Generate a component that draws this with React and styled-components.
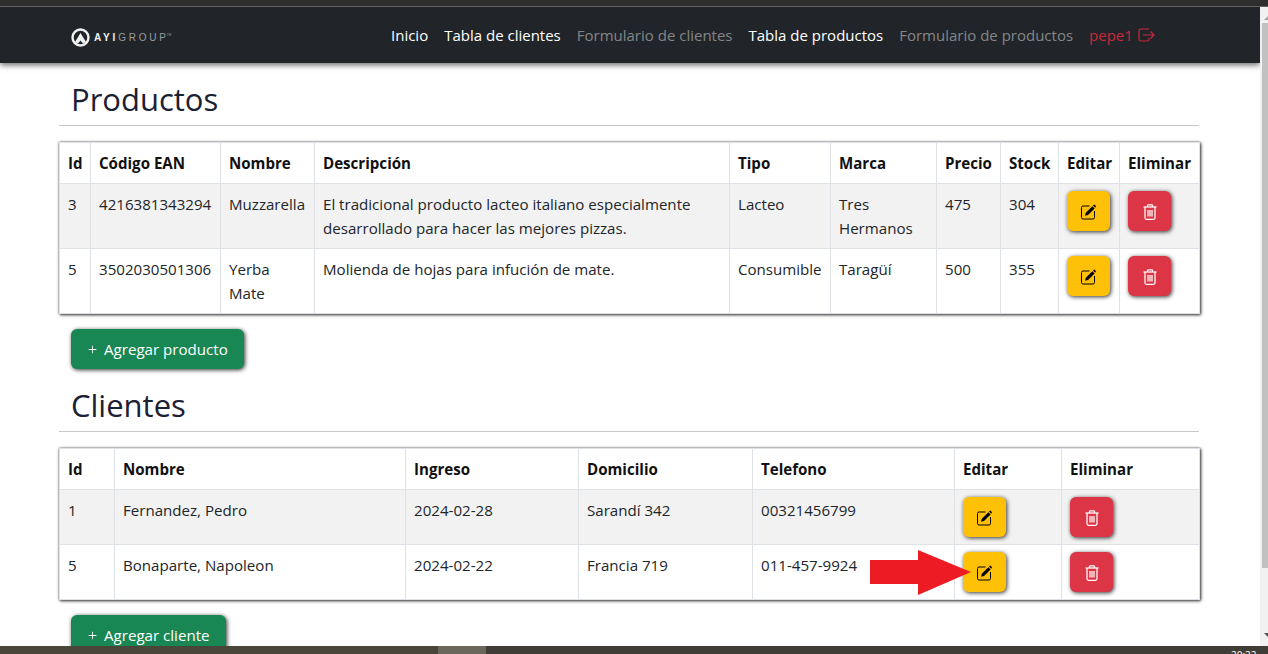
import React from 'react';
import styled, { createGlobalStyle } from 'styled-components';
import { AiOutlinePlus } from 'react-icons/ai';

const GlobalStyle = createGlobalStyle`
  html, body { margin: 0; padding: 0; background: #fff; overflow: hidden; }
  * { box-sizing: border-box; }
`;

const Screen = styled.div`
  width: 1268px;
  height: 654px;
  display: flex;
  flex-direction: column;
  overflow: hidden;
  font-family: 'Open Sans', 'Liberation Sans', sans-serif;
  font-size: 15.1px;
  line-height: 24px;
  color: #212529;
`;

const TopStrip = styled.div`
  flex: none;
  height: 7px;
  background: #2e2e2e;
  border-bottom: 1px solid #5f5f5f;
`;

const Middle = styled.div`
  flex: 1;
  min-height: 0;
  display: flex;
`;

const Page = styled.div`
  position: relative;
  flex: 1;
  min-width: 0;
  overflow: hidden;
  background: #fff;
`;

const Navbar = styled.nav`
  height: 56px;
  padding-left: 71px;
  display: flex;
  align-items: center;
  background: #212529;
  box-shadow: 0 2px 6px rgba(0, 0, 0, 0.6);
`;

const Brand = styled.div`
  width: 320px;
  padding-top: 5px;
  display: flex;
  align-items: center;
  gap: 4px;
`;

const BrandText = styled.span`
  font-family: 'Liberation Sans', sans-serif;
  font-size: 10px;
  line-height: 12px;
  letter-spacing: 2.8px;
  color: #9a9c9e;
  white-space: nowrap;
`;

const BrandStrong = styled.b`
  color: #f2f2f2;
`;

const BrandMark = styled.sup`
  margin-left: -2px;
  font-size: 3px;
  line-height: 0;
  letter-spacing: 0;
  vertical-align: 5px;
`;

const Links = styled.div`
  display: flex;
  align-items: center;
  gap: 16px;
  font-size: 15px;
`;

const NavLink = styled.a`
  color: ${p => (p.$dim ? 'rgba(255, 255, 255, 0.45)' : '#fff')};
  white-space: nowrap;
`;

const UserLink = styled.a`
  display: flex;
  align-items: center;
  gap: 5px;
  color: #c72a3c;
`;

const Container = styled.main`
  width: 1140px;
  margin-left: 59px;
`;

const Title = styled.h1`
  margin: 0;
  padding: 11px 12px 0;
  height: 63px;
  font-size: 31px;
  line-height: 50px;
  font-weight: 500;
  color: #1c2033;
  border-bottom: 1px solid #c8c8c8;
`;

const Table = styled.table`
  width: 1140px;
  margin-top: 16px;
  table-layout: fixed;
  border-collapse: collapse;
  box-shadow: 1px 1px 3px rgba(0, 0, 0, 0.75), 0 0 2px rgba(0, 0, 0, 0.5);
`;

const Th = styled.th`
  padding: 8px;
  text-align: left;
  font-weight: 700;
  color: #111;
  border: 1px solid #dee2e6;
  white-space: nowrap;
`;

const Row = styled.tr`
  background: ${p => (p.$striped ? '#f2f2f2' : '#fff')};
`;

const Td = styled.td`
  padding: 8px;
  vertical-align: top;
  border: 1px solid #dee2e6;
`;

const ActionCell = styled.td`
  padding: 7px 8px;
  vertical-align: top;
  border: 1px solid #dee2e6;
`;

const ActionButton = styled.button`
  width: 43px;
  height: 40px;
  padding: 2px 0 0;
  display: flex;
  align-items: center;
  justify-content: center;
  border: none;
  border-radius: 6px;
  background: ${p => (p.$danger ? '#dc3545' : '#ffc107')};
  color: ${p => (p.$danger ? '#fff' : '#000')};
  box-shadow: 1px 1px 4px rgba(0, 0, 0, 0.8);
`;

const AddButton = styled.button`
  height: 40px;
  margin: 15px 0 0 12px;
  padding: 0 16px;
  display: flex;
  align-items: center;
  gap: 6px;
  border: none;
  border-radius: 6px;
  background: #198754;
  color: #fff;
  font: inherit;
  box-shadow: 1px 1px 4px rgba(0, 0, 0, 0.8);
`;

const ArrowMark = styled.svg`
  position: absolute;
  left: 870px;
  top: 543px;
`;

const Scrollbar = styled.div`
  flex: none;
  width: 8px;
  display: flex;
  flex-direction: column;
  align-items: flex-start;
  background: #f1f1f1;
`;

const ScrollArrow = styled.div`
  flex: none;
  width: 0;
  height: 0;
  margin: ${p => (p.$down ? 'auto 0 9px 4px' : '9px 0 0 4px')};
  border-left: 4px solid transparent;
  border-right: 4px solid transparent;
  border-top: ${p => (p.$down ? '4px solid #505050' : 'none')};
  border-bottom: ${p => (p.$down ? 'none' : '4px solid #a3a3a3')};
`;

const ScrollThumb = styled.div`
  flex: none;
  width: 6px;
  height: 545px;
  margin: 3px 0 0 2px;
  background: #c1c1c1;
`;

const Taskbar = styled.footer`
  flex: none;
  height: 8px;
  display: flex;
  overflow: hidden;
  background: #4a4539;
`;

const TaskSlot = styled.div`
  width: 48px;
  margin-left: 438px;
  background: #6c675d;
`;

const TaskRest = styled.div`
  flex: 1;
  background: #3f3d35;
`;

const Clock = styled.span`
  position: absolute;
  left: 1231px;
  top: 649px;
  height: 5px;
  overflow: hidden;
  font-size: 10px;
  line-height: 12px;
  color: #fff;
`;

const productCols = [31, 130, 94, 415, 101, 106, 64, 58, 61, 80];
const clientCols = [55, 291, 173, 174, 202, 107, 138];

const products = [
  {
    id: 3,
    ean: '4216381343294',
    name: 'Muzzarella',
    desc: 'El tradicional producto lacteo italiano especialmente desarrollado para hacer las mejores pizzas.',
    type: 'Lacteo',
    brand: 'Tres Hermanos',
    price: 475,
    stock: 304,
  },
  {
    id: 5,
    ean: '3502030501306',
    name: 'Yerba Mate',
    desc: 'Molienda de hojas para infución de mate.',
    type: 'Consumible',
    brand: 'Taragüí',
    price: 500,
    stock: 355,
  },
];

const clients = [
  { id: 1, name: 'Fernandez, Pedro', since: '2024-02-28', address: 'Sarandí 342', phone: '00321456799' },
  { id: 5, name: 'Bonaparte, Napoleon', since: '2024-02-22', address: 'Francia 719', phone: '011-457-9924' },
];

const Logo = () => (
  <svg width="19" height="19" viewBox="0 0 19 19">
    <circle cx="9.5" cy="9.5" r="8" fill="none" stroke="#f2f2f2" strokeWidth="2.4" />
    <path d="M9.5 5 L15 14 L12 15.5 L9.5 12.5 L7 15.5 L4 14 Z" fill="#f2f2f2" />
  </svg>
);

const LogoutIcon = () => (
  <svg width="17" height="14" viewBox="0 0 17 14" fill="none" stroke="currentColor" strokeWidth="1.2">
    <path d="M11 1 H2.5 A1.5 1.5 0 0 0 1 2.5 V11.5 A1.5 1.5 0 0 0 2.5 13 H9.5 A1.5 1.5 0 0 0 11 11.5 V10" />
    <path d="M5 7 H16 M12.5 3.5 L16 7 L12.5 10.5" />
  </svg>
);

const EditIcon = () => (
  <svg width="15" height="16" viewBox="0 0 15 16">
    <path
      d="M8.5 2 H2 A1.5 1.5 0 0 0 0.5 3.5 V13.5 A1.5 1.5 0 0 0 2 15 H12 A1.5 1.5 0 0 0 13.5 13.5 V7"
      fill="none"
      stroke="#000"
      strokeWidth="1"
    />
    <path d="M4 11.8 L4.8 8.8 L11.4 2.2 L13.6 4.4 L7 11 Z" fill="#000" />
    <path d="M12 1.6 L12.8 0.8 Q13.2 0.4 13.7 0.8 L14.8 1.9 Q15 2.4 14.7 2.8 L14.2 3.8 Z" fill="#000" />
  </svg>
);

const TrashIcon = () => (
  <svg width="14" height="16" viewBox="0 0 14 16" fill="none" stroke="#fff" strokeWidth="1.25">
    <path d="M0.5 3 H13.5" />
    <path d="M4.5 3 V1.5 Q4.5 0.8 5.2 0.8 H8.8 Q9.5 0.8 9.5 1.5 V3" />
    <path d="M2 3 V13.8 Q2 15.3 3.5 15.3 H10.5 Q12 15.3 12 13.8 V3" />
    <path d="M5 6 V12.5 M7 6 V12.5 M9 6 V12.5" />
  </svg>
);

const RowActions = () => (
  <>
    <ActionCell>
      <ActionButton><EditIcon /></ActionButton>
    </ActionCell>
    <ActionCell>
      <ActionButton $danger><TrashIcon /></ActionButton>
    </ActionCell>
  </>
);

const Columns = ({ widths }) => (
  <colgroup>
    {widths.map((w, i) => <col key={i} width={w} />)}
  </colgroup>
);

export default function App() {
  return (
    <Screen>
      <GlobalStyle />
      <TopStrip />
      <Middle>
        <Page>
          <Navbar>
            <Brand>
              <Logo />
              <BrandText><BrandStrong>AYI</BrandStrong>GROUP<BrandMark>TM</BrandMark></BrandText>
            </Brand>
            <Links>
              <NavLink>Inicio</NavLink>
              <NavLink>Tabla de clientes</NavLink>
              <NavLink $dim>Formulario de clientes</NavLink>
              <NavLink>Tabla de productos</NavLink>
              <NavLink $dim>Formulario de productos</NavLink>
              <UserLink>pepe1 <LogoutIcon /></UserLink>
            </Links>
          </Navbar>

          <Container>
            <Title>Productos</Title>
            <Table>
              <Columns widths={productCols} />
              <thead>
                <tr>
                  {['Id', 'Código EAN', 'Nombre', 'Descripción', 'Tipo', 'Marca', 'Precio', 'Stock', 'Editar', 'Eliminar'].map(h => (
                    <Th key={h}>{h}</Th>
                  ))}
                </tr>
              </thead>
              <tbody>
                {products.map((p, i) => (
                  <Row key={p.id} $striped={i % 2 === 0}>
                    <Td>{p.id}</Td>
                    <Td>{p.ean}</Td>
                    <Td>{p.name}</Td>
                    <Td>{p.desc}</Td>
                    <Td>{p.type}</Td>
                    <Td>{p.brand}</Td>
                    <Td>{p.price}</Td>
                    <Td>{p.stock}</Td>
                    <RowActions />
                  </Row>
                ))}
              </tbody>
            </Table>
            <AddButton><AiOutlinePlus size={11} /> Agregar producto</AddButton>

            <Title>Clientes</Title>
            <Table>
              <Columns widths={clientCols} />
              <thead>
                <tr>
                  {['Id', 'Nombre', 'Ingreso', 'Domicilio', 'Telefono', 'Editar', 'Eliminar'].map(h => (
                    <Th key={h}>{h}</Th>
                  ))}
                </tr>
              </thead>
              <tbody>
                {clients.map((c, i) => (
                  <Row key={c.id} $striped={i % 2 === 0}>
                    <Td>{c.id}</Td>
                    <Td>{c.name}</Td>
                    <Td>{c.since}</Td>
                    <Td>{c.address}</Td>
                    <Td>{c.phone}</Td>
                    <RowActions />
                  </Row>
                ))}
              </tbody>
            </Table>
            <AddButton><AiOutlinePlus size={11} /> Agregar cliente</AddButton>
          </Container>

          <ArrowMark width="102" height="46" viewBox="0 0 102 46">
            <path d="M0 10 H48 V0 L101 22 L48 45 V34 H0 Z" fill="#ed1c24" />
          </ArrowMark>
        </Page>
        <Scrollbar>
          <ScrollArrow />
          <ScrollThumb />
          <ScrollArrow $down />
        </Scrollbar>
      </Middle>
      <Taskbar>
        <TaskSlot />
        <TaskRest />
      </Taskbar>
      <Clock>20:22</Clock>
    </Screen>
  );
}
